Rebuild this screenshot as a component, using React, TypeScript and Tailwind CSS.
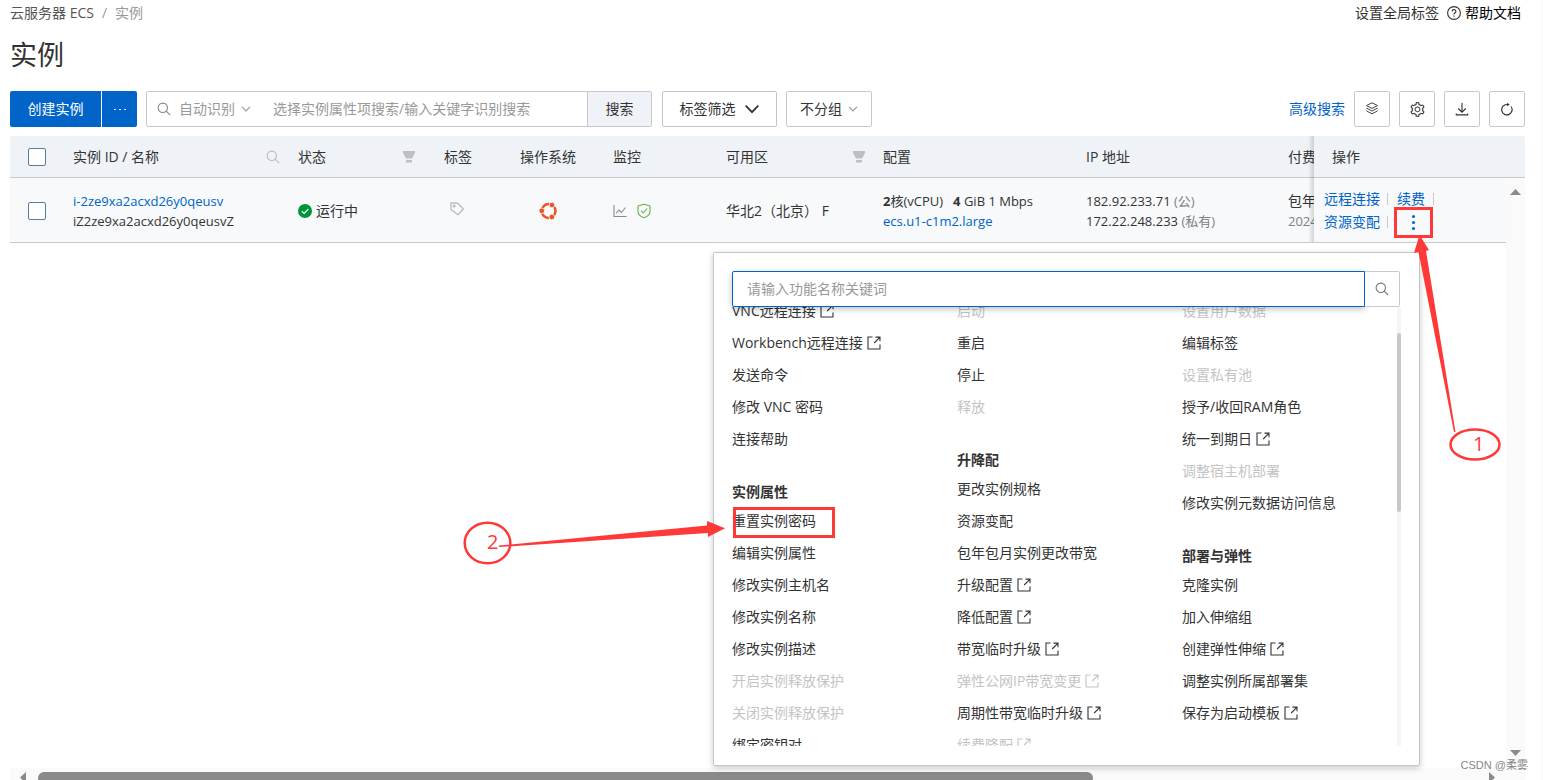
import type { ReactNode } from "react";
import { AiOutlineSetting } from "react-icons/ai";

type Item = { label: string; off?: boolean; ext?: boolean };
type Group = { title?: string; items: Item[] };

const columns: Group[][] = [
  [
    {
      items: [
        { label: "VNC远程连接", ext: true },
        { label: "Workbench远程连接", ext: true },
        { label: "发送命令" },
        { label: "修改 VNC 密码" },
        { label: "连接帮助" },
      ],
    },
    {
      title: "实例属性",
      items: [
        { label: "重置实例密码" },
        { label: "编辑实例属性" },
        { label: "修改实例主机名" },
        { label: "修改实例名称" },
        { label: "修改实例描述" },
        { label: "开启实例释放保护", off: true },
        { label: "关闭实例释放保护", off: true },
        { label: "绑定密钥对" },
      ],
    },
  ],
  [
    {
      items: [
        { label: "启动", off: true },
        { label: "重启" },
        { label: "停止" },
        { label: "释放", off: true },
      ],
    },
    {
      title: "升降配",
      items: [
        { label: "更改实例规格" },
        { label: "资源变配" },
        { label: "包年包月实例更改带宽" },
        { label: "升级配置", ext: true },
        { label: "降低配置", ext: true },
        { label: "带宽临时升级", ext: true },
        { label: "弹性公网IP带宽变更", ext: true, off: true },
        { label: "周期性带宽临时升级", ext: true },
        { label: "续费降配", ext: true, off: true },
      ],
    },
  ],
  [
    {
      items: [
        { label: "设置用户数据", off: true },
        { label: "编辑标签" },
        { label: "设置私有池", off: true },
        { label: "授予/收回RAM角色" },
        { label: "统一到期日", ext: true },
        { label: "调整宿主机部署", off: true },
        { label: "修改实例元数据访问信息" },
      ],
    },
    {
      title: "部署与弹性",
      items: [
        { label: "克隆实例" },
        { label: "加入伸缩组" },
        { label: "创建弹性伸缩", ext: true },
        { label: "调整实例所属部署集" },
        { label: "保存为启动模板", ext: true },
      ],
    },
  ],
];

function SearchIcon({ className }: { className?: string }) {
  return (
    <svg className={className} width="14" height="14" viewBox="0 0 14 14" fill="none" stroke="currentColor" strokeWidth="1.1">
      <circle cx="5.8" cy="5.8" r="4.7" />
      <path d="M9.2 9.2 13.2 13.2" />
    </svg>
  );
}

function Chevron({ className, size, weight }: { className?: string; size: number; weight: number }) {
  return (
    <svg className={className} width={size} height={size} viewBox="0 0 14 14" fill="none" stroke="currentColor" strokeWidth={weight}>
      <path d="M1.5 4 7 9.8 12.5 4" />
    </svg>
  );
}

function FunnelIcon() {
  return (
    <svg width="12" height="12" viewBox="0 0 12 12" fill="#bfbfbf">
      <path d="M0 0h12v2L9 7.600H3L0 2z" />
      <path d="M3 9h6v2.600H3z" />
    </svg>
  );
}

function ExternalIcon() {
  return (
    <svg className="shrink-0" width="14" height="14" viewBox="0 0 14 14" fill="none" stroke="currentColor" strokeWidth="1.1">
      <path d="M5.500 1H1v12h12V8.500" />
      <path d="M8.500 1.100H13v4.200M12.800 1.300 7.200 7" />
    </svg>
  );
}

function TagIcon() {
  return (
    <svg width="16" height="16" viewBox="0 0 16 16" fill="none" stroke="#bdbdbd" strokeWidth="1.400">
      <path d="M2 2h6.500L14.300 8 9 13.700 2 8.500z" strokeLinejoin="round" />
      <circle cx="5.200" cy="5" r=".8" />
    </svg>
  );
}

function UbuntuIcon() {
  return (
    <svg width="18" height="18" viewBox="0 0 18 18" fill="none" stroke="#e95420">
      <circle cx="9.600" cy="9" r="6.900" strokeWidth="2.500" />
      <g stroke="#f7f9fb" strokeWidth=".8" fill="#e95420">
        <circle cx="2.800" cy="8.800" r="2.800" />
        <circle cx="13" cy="3" r="2.800" />
        <circle cx="12.800" cy="15" r="2.800" />
      </g>
    </svg>
  );
}

function ChartIcon() {
  return (
    <svg width="14" height="14" viewBox="0 0 14 14" fill="none" stroke="#8a8a8a" strokeWidth="1.100">
      <path d="M1 1v11.500h12.500" />
      <path d="M3 9.500 6 6l2.500 2.500L12.500 3.500" />
    </svg>
  );
}

function ShieldIcon() {
  return (
    <svg width="16" height="16" viewBox="0 0 16 16" fill="none" stroke="#6ab04c" strokeWidth="1.100">
      <path d="M8 1.200 14 3v5.500c0 3-2.500 5-6 6.300-3.500-1.300-6-3.300-6-6.300V3z" strokeLinejoin="round" />
      <path d="m5 7.600 2.300 2.200L11.200 5.500" />
    </svg>
  );
}

function IconButton({ label, children }: { label: string; children: ReactNode }) {
  return (
    <button aria-label={label} className="flex size-9 items-center justify-center rounded-xs border border-[#c8c9cc] bg-white">
      {children}
    </button>
  );
}

function Toolbar() {
  return (
    <div className="flex h-9 items-stretch">
      <button className="w-[91px] rounded-l-xs bg-[#0064c8] text-white">创建实例</button>
      <button aria-label="更多" className="ml-px flex w-[35px] items-center justify-center gap-[3px] rounded-r-xs bg-[#0064c8]">
        <span className="h-px w-0.5 bg-white" />
        <span className="h-px w-0.5 bg-white" />
        <span className="h-px w-0.5 bg-white" />
      </button>
      <div className="ml-[9px] flex w-[506px] rounded-xs border border-[#c8c9cc]">
        <button className="flex items-center pl-[10px] text-[#999]">
          <SearchIcon className="mr-2 text-[#888]" />
          自动识别
          <Chevron className="ml-1.5" size={10} weight={1.6} />
        </button>
        <input
          aria-label="搜索实例"
          placeholder="选择实例属性项搜索/输入关键字识别搜索"
          className="ml-[22px] min-w-0 flex-1 outline-none placeholder:text-[#999]"
        />
        <button className="w-16 border-l border-[#c8c9cc] bg-[#eff3f8] text-[#333]">搜索</button>
      </div>
      <button className="ml-[10px] flex w-[115px] items-center justify-center gap-2 rounded-xs border border-[#c0c6cc] text-[#333]">
        标签筛选
        <Chevron size={16} weight={1.6} />
      </button>
      <button className="ml-[9px] flex w-[86px] items-center justify-center gap-1.5 rounded-xs border border-[#c8c9cc] text-[#333]">
        不分组
        <Chevron className="text-[#999]" size={10} weight={1.6} />
      </button>
      <div className="ml-auto flex items-center gap-[9px]">
        <a href="#search" className="text-[#0064c8]">高级搜索</a>
        <IconButton label="资源组">
          <svg width="14" height="14" viewBox="0 0 14 14" fill="none" stroke="#444" strokeWidth="1" strokeLinejoin="round">
            <path d="M7 .8 12.500 3.600 7 6.400 1.500 3.600z" />
            <path d="M1.500 6.100 7 9l5.500-2.900M1.500 8.900 7 11.800l5.500-2.900" />
          </svg>
        </IconButton>
        <IconButton label="设置">
          <AiOutlineSetting size={17} color="#444" />
        </IconButton>
        <IconButton label="下载">
          <svg width="14" height="14" viewBox="0 0 14 14" fill="none" stroke="#333" strokeWidth="1.100">
            <path d="M7 1v9M3.200 6.500 7 10.200l3.800-3.700M1.300 11.500v1.400h11.400v-1.400" />
          </svg>
        </IconButton>
        <IconButton label="刷新">
          <svg width="14" height="14" viewBox="0 0 14 14" fill="none" stroke="#333" strokeWidth="1.200">
            <path d="M8.200 2.500H7A5.200 5.200 0 1 0 11 4.500" />
            <path d="M7.200.8v3.400L9.600 2.500z" fill="#333" stroke="none" />
          </svg>
        </IconButton>
      </div>
    </div>
  );
}

const box = "block size-[18px] appearance-none rounded-xs border border-[#5a7ba0] bg-white";

function InstanceTable() {
  return (
    <table className="w-full table-fixed border-collapse text-left text-[#333]">
      <colgroup>
        <col className="w-[52px]" />
        <col className="w-[225px]" />
        <col className="w-[146px]" />
        <col className="w-[76px]" />
        <col className="w-[93px]" />
        <col className="w-[113px]" />
        <col className="w-[157px]" />
        <col className="w-[203px]" />
        <col className="w-[202px]" />
        <col className="w-[37px]" />
        <col />
      </colgroup>
      <thead>
        <tr className="h-[41px] border-b border-[#c8c9cc] bg-[#eff3f8] *:p-0 *:pt-0.5 *:pl-[11px] *:font-normal">
          <th>
            <input type="checkbox" aria-label="全选" className={`${box} ml-[7px]`} />
          </th>
          <th>
            <div className="flex items-center justify-between pr-[7px]">
              实例 ID / 名称
              <SearchIcon className="text-[#bbb]" />
            </div>
          </th>
          <th>
            <div className="flex items-center justify-between pr-[18px]">
              状态
              <FunnelIcon />
            </div>
          </th>
          <th>标签</th>
          <th>操作系统</th>
          <th>监控</th>
          <th>
            <div className="flex items-center justify-between pr-[7px]">
              可用区
              <FunnelIcon />
            </div>
          </th>
          <th>配置</th>
          <th>IP 地址</th>
          <th className="overflow-hidden whitespace-nowrap">付费</th>
          <th>
            <span className="pl-[7px]">操作</span>
          </th>
        </tr>
      </thead>
      <tbody>
        <tr className="h-[65px] border-b border-[#c8c9cc] bg-[#f7f9fb] *:p-0 *:pt-0.5 *:pl-[11px] *:leading-5">
          <td>
            <input type="checkbox" aria-label="选择实例" className={`${box} ml-[7px]`} />
          </td>
          <td className="text-[13px]">
            <a href="#instance" className="text-[#0064c8]">i-2ze9xa2acxd26y0qeusv</a>
            <div>iZ2ze9xa2acxd26y0qeusvZ</div>
          </td>
          <td>
            <div className="flex items-center gap-1">
              <svg width="14" height="14" viewBox="0 0 14 14" fill="none">
                <circle cx="7" cy="7" r="7" fill="#00953a" />
                <path d="m3.800 7.200 2.300 2.200 4.200-4.300" stroke="#fff" strokeWidth="1.300" />
              </svg>
              运行中
            </div>
          </td>
          <td>
            <div className="pb-1 pl-[5px]"><TagIcon /></div>
          </td>
          <td>
            <div className="pl-[19px]"><UbuntuIcon /></div>
          </td>
          <td>
            <div className="flex items-center gap-[9px]">
              <ChartIcon />
              <ShieldIcon />
            </div>
          </td>
          <td className="whitespace-nowrap">华北2（北京） F</td>
          <td className="text-[13px]">
            <div className="flex gap-2.5 whitespace-nowrap">
              <span><b>2</b>核(vCPU)</span>
              <span><b>4</b> GiB 1 Mbps</span>
            </div>
            <a href="#type" className="text-[#0064c8]">ecs.u1-c1m2.large</a>
          </td>
          <td className="text-[13px]">
            <div>182.92.233.71 <span className="text-[#808080]">(公)</span></div>
            <div>172.22.248.233 <span className="text-[#808080]">(私有)</span></div>
          </td>
          <td className="overflow-hidden whitespace-nowrap">
            <div>包年</div>
            <div className="text-[13px] text-[#808080]">2024</div>
          </td>
          <td>
            <div className="-ml-px grid w-[120px] grid-cols-[64px_1fr] gap-y-[3px] text-[#0064c8]">
              <div className="flex items-center justify-between">
                <a href="#connect">远程连接</a>
                <i className="h-3 w-px bg-[#c8c9cc]" />
              </div>
              <div className="flex items-center justify-between pr-[10px] pl-[9px]">
                <a href="#renew">续费</a>
                <i className="h-3 w-px bg-[#c8c9cc]" />
              </div>
              <div className="flex items-center justify-between">
                <a href="#resize">资源变配</a>
                <i className="h-3 w-px bg-[#c8c9cc]" />
              </div>
              <button aria-label="更多操作" className="ml-[24px] flex flex-col items-start justify-center gap-[3px]">
                <span className="size-[3px] rounded-full bg-[#0064c8]" />
                <span className="size-[3px] rounded-full bg-[#0064c8]" />
                <span className="size-[3px] rounded-full bg-[#0064c8]" />
              </button>
            </div>
          </td>
        </tr>
      </tbody>
    </table>
  );
}

function ActionMenu() {
  return (
    <div className="absolute top-[252px] right-[121px] flex h-[514px] w-[707px] flex-col rounded-xs border border-[#c4c6cc] bg-white pt-[18px] pr-[19px] pb-[19px] pl-[18px] text-[#333] shadow-[0_2px_6px_rgba(0,0,0,0.22)]">
      <div className="relative z-10 flex h-9">
        <input
          aria-label="功能名称关键词"
          placeholder="请输入功能名称关键词"
          className="min-w-0 flex-1 rounded-l-xs border border-[#0064c8] bg-white pl-[14px] shadow-[0_2px_6px_rgba(0,0,0,0.25)] outline-none placeholder:text-[#999]"
        />
        <button aria-label="搜索功能" className="flex w-[35px] items-center justify-center rounded-r-xs border border-l-0 border-[#c8c9cc] bg-white text-[#777]">
          <SearchIcon />
        </button>
      </div>
      <div className="-mr-px flex min-h-0 flex-1 justify-between overflow-hidden">
        <div className="-mt-3 grid flex-1 grid-cols-[225px_225px_1fr] items-start">
          {columns.map((groups, index) => (
            <div key={index} className="flex flex-col gap-6">
              {groups.map((group, n) => (
                <section key={n}>
                  {group.title && <h3 className="flex h-[26px] items-center font-bold">{group.title}</h3>}
                  <ul>
                    {group.items.map((item) => (
                      <li key={item.label} className="h-8">
                        <button disabled={item.off} className="flex h-full items-center gap-1 whitespace-nowrap disabled:text-[#c4c4c4]">
                          {item.label}
                          {item.ext && <ExternalIcon />}
                        </button>
                      </li>
                    ))}
                  </ul>
                </section>
              ))}
            </div>
          ))}
        </div>
        <div className="w-1 bg-[#f5f5f5] pt-[26px]">
          <div className="h-[179px] rounded-full bg-[#c8c8c8]" />
        </div>
      </div>
    </div>
  );
}

function Annotations() {
  return (
    <svg className="pointer-events-none absolute top-0 -right-0.5" width="1543" height="780" viewBox="0 0 1543 780" fill="none" stroke="#ff3838">
      <rect x="1395.500" y="208.500" width="36" height="28" strokeWidth="3" />
      <rect x="734.500" y="508.500" width="99" height="28" strokeWidth="3" />
      <ellipse cx="1475" cy="444.500" rx="24.500" ry="15" strokeWidth="2.500" />
      <ellipse cx="487.500" cy="543" rx="22.800" ry="20.300" strokeWidth="2.500" />
      <g fill="#ff3838" stroke="none">
        <path d="M1454 432 1418.500 252 1414 253 1419.500 235 1429 250 1426 251 1455.500 432z" />
        <path d="M499 545.500 707 525.500V521L725 528.200 708 537v-4L499 547z" />
        <text x="1473" y="451" fontSize="20" fontFamily="Open Sans, sans-serif">1</text>
        <text x="487" y="549" fontSize="20" fontFamily="Open Sans, sans-serif">2</text>
      </g>
    </svg>
  );
}

export default function App() {
  return (
    <div className="relative flex h-screen flex-col overflow-hidden border-r-2 border-[#fafafa] bg-white pr-4 pl-[10px] font-['Open_Sans','Noto_Sans_CJK_SC',sans-serif] text-sm">
      <header className="flex h-[26px] shrink-0 items-center justify-between">
        <nav className="flex gap-2 text-[#999]">
          <a href="#ecs" className="text-[#555]">云服务器 ECS</a>
          <span>/</span>
          <span>实例</span>
        </nav>
        <div className="flex items-center gap-2 pr-1">
          <a href="#tags" className="text-[#333]">设置全局标签</a>
          <a href="#help" className="flex items-center gap-1 text-black">
            <svg width="14" height="14" viewBox="0 0 14 14" fill="none" stroke="#333" strokeWidth="1.100">
              <circle cx="7" cy="7" r="6.400" />
              <path d="M5.100 5.500c0-2.500 3.800-2.400 3.800-.1C8.900 6.800 7 6.800 7 8.500M7 9.600v1.200" />
            </svg>
            帮助文档
          </a>
        </div>
      </header>
      <h1 className="flex h-[65px] shrink-0 items-center pb-1.5 text-[27px] text-[#333]">实例</h1>
      <Toolbar />
      <main className="relative mt-[9px] min-h-0 flex-1 overflow-hidden rounded-t-xs">
        <InstanceTable />
        <div className="absolute top-0 left-[1298px] h-[106px] w-1.5 bg-linear-to-r from-transparent to-black/15" />
        <div className="absolute top-[42px] right-0 bottom-0 flex w-[19px] flex-col items-center justify-between bg-[#fafafa] pt-[11px] pb-3">
          <svg width="11" height="6" fill="#8a8a8a"><path d="M0 6 5.500 0 11 6z" /></svg>
          <svg width="11" height="6" fill="#8a8a8a"><path d="M0 0h11L5.500 6z" /></svg>
        </div>
      </main>
      <div className="flex h-3 shrink-0 items-start justify-between bg-[#fafafa] pt-1 pr-[30px] pl-[10px]">
        <svg width="6" height="11" viewBox="0 0 6 11" fill="#8a8a8a"><path d="M6 0v11L0 5.500z" /></svg>
        <div className="mr-auto ml-3 h-3 w-[1055px] rounded-full bg-[#8a8a8a]" />
        <svg width="6" height="11" viewBox="0 0 6 11" fill="#8a8a8a"><path d="M0 0v11l6-5.500z" /></svg>
      </div>
      <ActionMenu />
      <Annotations />
      <span className="absolute right-[13px] bottom-[7px] font-['Liberation_Sans','Noto_Sans_CJK_SC',sans-serif] text-[11px] leading-4 text-[#888]">CSDN @柔雾</span>
    </div>
  );
}
